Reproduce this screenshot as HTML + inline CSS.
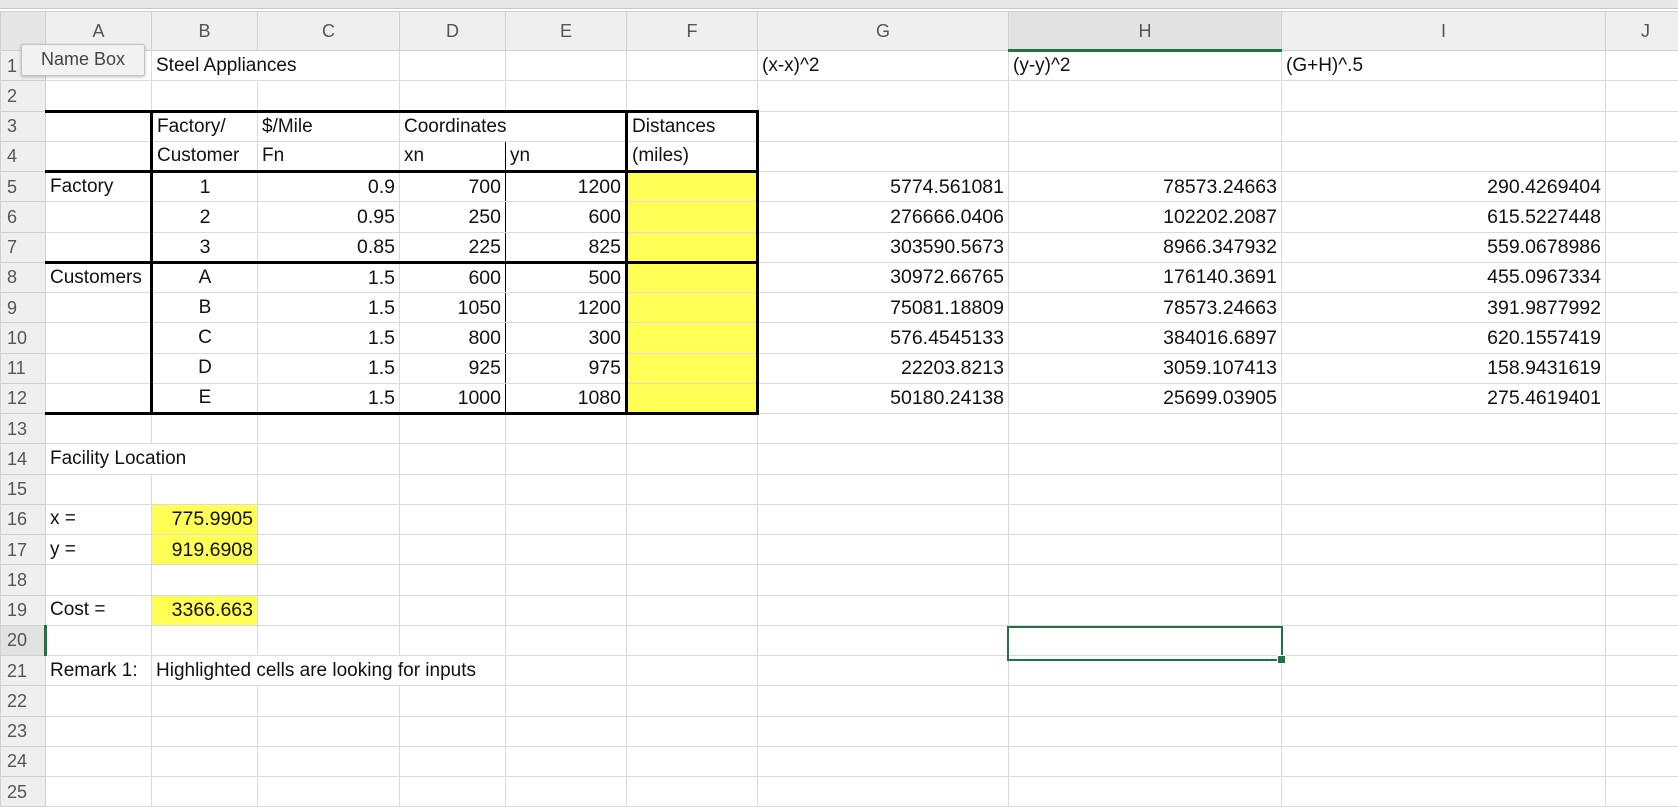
<!DOCTYPE html>
<html><head><meta charset="utf-8"><style>
html,body{margin:0;padding:0;width:1678px;height:804px;overflow:hidden;background:#fff;font-family:"Liberation Sans",sans-serif;}
.top{position:absolute;left:0;top:0;width:1678px;height:8px;background:#e8e8e8;border-bottom:1px solid #c8c8c8}
table{position:absolute;left:0;top:11px;width:1685px;border-collapse:collapse;table-layout:fixed;font-size:19px;color:#111}
td{border:1px solid #dadada;height:30.25px;padding:0 4px;white-space:nowrap;overflow:visible;box-sizing:border-box;line-height:22px}
td.n{font-size:19.5px}
tr.h td{height:39px;background:#efefef;color:#555;text-align:center;font-size:18px;border-color:#d0d0d0}
td.rh{background:#efefef;color:#555;text-align:left;padding-left:6px;font-size:18px;border-color:#d0d0d0}
.r{text-align:right}.c{text-align:center}
.y{background:#ffff55}
.tt{border-top:3px solid #000}.tb{border-bottom:3px solid #000}.tl{border-left:3px solid #000}.tr{border-right:3px solid #000}
.nr{border-right-style:hidden}
.g{color:#217346}
.nb{position:absolute;left:21px;top:44px;width:122px;height:30px;background:#f2f2f2;border:1px solid #c4c4c4;box-shadow:0 1px 3px rgba(0,0,0,.25);font-size:18px;color:#444;line-height:28px;text-align:center;border-radius:2px}
.sel{position:absolute;left:1007px;top:626px;width:276px;height:35px;border:2px solid #217346;box-sizing:border-box}
.sel:after{content:"";position:absolute;right:-5px;bottom:-5px;width:7px;height:7px;background:#217346;border:1px solid #fff}
</style></head><body>
<div class="top"></div>
<table>
<colgroup><col style="width:45px"><col style="width:106px"><col style="width:106px"><col style="width:142px"><col style="width:106px"><col style="width:121px"><col style="width:131px"><col style="width:251px"><col style="width:273px"><col style="width:324px"><col style="width:80px"></colgroup>
<tr class="h"><td style="background:#e6e6e6"></td><td>A</td><td>B</td><td>C</td><td>D</td><td>E</td><td>F</td><td>G</td><td class="g" style="background:#e2e2e2;border-bottom:3px solid #217346">H</td><td>I</td><td>J</td></tr>
<tr><td class="rh">1</td><td></td><td class="nr">Steel Appliances</td><td></td><td></td><td></td><td></td><td>(x-x)^2</td><td>(y-y)^2</td><td>(G+H)^.5</td><td></td></tr>
<tr><td class="rh">2</td><td></td><td></td><td></td><td></td><td></td><td></td><td></td><td></td><td></td><td></td></tr>
<tr><td class="rh">3</td><td class="tt"></td><td class="tt tl">Factory/</td><td class="tt">$/Mile</td><td class="tt" style="border-right:none">Coordinates</td><td class="tt" style="border-left:none;border-bottom-color:#dadada"></td><td class="tt tl tr">Distances</td><td></td><td></td><td></td><td></td></tr>
<tr><td class="rh">4</td><td class="tb"></td><td class="tl tb">Customer</td><td class="tb">Fn</td><td class="tb" style="border-right:1px solid #000">xn</td><td class="tb">yn</td><td class="tl tr tb">(miles)</td><td></td><td></td><td></td><td></td></tr>
<tr><td class="rh">5</td><td>Factory</td><td class="tl c n">1</td><td class="r n">0.9</td><td class="r n" style="border-right:1px solid #000">700</td><td class="r n">1200</td><td class="y tl tr"></td><td class="r n">5774.561081</td><td class="r n">78573.24663</td><td class="r n">290.4269404</td><td></td></tr>
<tr><td class="rh">6</td><td></td><td class="tl c n">2</td><td class="r n">0.95</td><td class="r n" style="border-right:1px solid #000">250</td><td class="r n">600</td><td class="y tl tr"></td><td class="r n">276666.0406</td><td class="r n">102202.2087</td><td class="r n">615.5227448</td><td></td></tr>
<tr><td class="rh">7</td><td class="tb"></td><td class="tl c tb n">3</td><td class="r tb n">0.85</td><td class="r tb n" style="border-right:1px solid #000">225</td><td class="r tb n">825</td><td class="y tl tr tb"></td><td class="r n">303590.5673</td><td class="r n">8966.347932</td><td class="r n">559.0678986</td><td></td></tr>
<tr><td class="rh">8</td><td>Customers</td><td class="tl c">A</td><td class="r n">1.5</td><td class="r n" style="border-right:1px solid #000">600</td><td class="r n">500</td><td class="y tl tr"></td><td class="r n">30972.66765</td><td class="r n">176140.3691</td><td class="r n">455.0967334</td><td></td></tr>
<tr><td class="rh">9</td><td></td><td class="tl c">B</td><td class="r n">1.5</td><td class="r n" style="border-right:1px solid #000">1050</td><td class="r n">1200</td><td class="y tl tr"></td><td class="r n">75081.18809</td><td class="r n">78573.24663</td><td class="r n">391.9877992</td><td></td></tr>
<tr><td class="rh">10</td><td></td><td class="tl c">C</td><td class="r n">1.5</td><td class="r n" style="border-right:1px solid #000">800</td><td class="r n">300</td><td class="y tl tr"></td><td class="r n">576.4545133</td><td class="r n">384016.6897</td><td class="r n">620.1557419</td><td></td></tr>
<tr><td class="rh">11</td><td></td><td class="tl c">D</td><td class="r n">1.5</td><td class="r n" style="border-right:1px solid #000">925</td><td class="r n">975</td><td class="y tl tr"></td><td class="r n">22203.8213</td><td class="r n">3059.107413</td><td class="r n">158.9431619</td><td></td></tr>
<tr><td class="rh">12</td><td class="tb"></td><td class="tl c tb">E</td><td class="r tb n">1.5</td><td class="r tb n" style="border-right:1px solid #000">1000</td><td class="r tb n">1080</td><td class="y tl tr tb"></td><td class="r n">50180.24138</td><td class="r n">25699.03905</td><td class="r n">275.4619401</td><td></td></tr>
<tr><td class="rh">13</td><td></td><td></td><td></td><td></td><td></td><td></td><td></td><td></td><td></td><td></td></tr>
<tr><td class="rh">14</td><td class="nr">Facility Location</td><td></td><td></td><td></td><td></td><td></td><td></td><td></td><td></td><td></td></tr>
<tr><td class="rh">15</td><td></td><td></td><td></td><td></td><td></td><td></td><td></td><td></td><td></td><td></td></tr>
<tr><td class="rh">16</td><td>x =</td><td class="y r n">775.9905</td><td></td><td></td><td></td><td></td><td></td><td></td><td></td><td></td></tr>
<tr><td class="rh">17</td><td>y =</td><td class="y r n">919.6908</td><td></td><td></td><td></td><td></td><td></td><td></td><td></td><td></td></tr>
<tr><td class="rh">18</td><td></td><td></td><td></td><td></td><td></td><td></td><td></td><td></td><td></td><td></td></tr>
<tr><td class="rh">19</td><td>Cost =</td><td class="y r n">3366.663</td><td></td><td></td><td></td><td></td><td></td><td></td><td></td><td></td></tr>
<tr><td class="rh g" style="background:#e2e2e2;border-right:3px solid #217346">20</td><td></td><td></td><td></td><td></td><td></td><td></td><td></td><td></td><td></td><td></td></tr>
<tr><td class="rh">21</td><td>Remark 1:</td><td class="nr">Highlighted cells are looking for inputs</td><td class="nr"></td><td></td><td></td><td></td><td></td><td></td><td></td><td></td></tr>
<tr><td class="rh">22</td><td></td><td></td><td></td><td></td><td></td><td></td><td></td><td></td><td></td><td></td></tr>
<tr><td class="rh">23</td><td></td><td></td><td></td><td></td><td></td><td></td><td></td><td></td><td></td><td></td></tr>
<tr><td class="rh">24</td><td></td><td></td><td></td><td></td><td></td><td></td><td></td><td></td><td></td><td></td></tr>
<tr><td class="rh">25</td><td></td><td></td><td></td><td></td><td></td><td></td><td></td><td></td><td></td><td></td></tr>
</table>
<div class="nb">Name Box</div>
<div class="sel"></div>
</body></html>
